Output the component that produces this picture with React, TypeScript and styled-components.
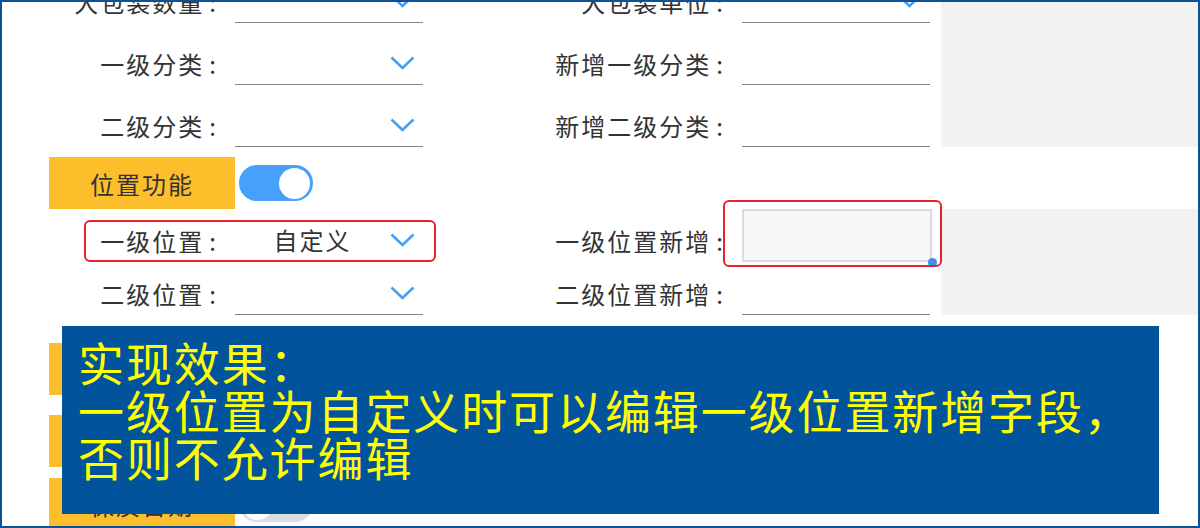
import styled, { createGlobalStyle } from "styled-components";

const GlobalStyle = createGlobalStyle`
  html, body {
    margin: 0;
    padding: 0;
    background: #ffffff;
  }
  body {
    font-family: "Noto Sans CJK SC", "Noto Sans", sans-serif;
  }
`;

const Chevron = () => (
  <svg width="25" height="14" viewBox="0 0 25 14">
    <polyline
      points="1.5,1.5 12.5,12 23.5,1.5"
      fill="none"
      stroke="#45a0f5"
      strokeWidth="2.6"
    />
  </svg>
);

const App = () => {
  return (
    <Frame>
      <GlobalStyle />
      <Content>
        <Group>
          <Rows>
            <Row $height={62}>
              <Item>
                <Label $width={169}>大包装数量</Label>
                <Field>
                  <Value />
                  <Chevron />
                </Field>
              </Item>
              <Item>
                <Label $width={285}>大包装单位</Label>
                <Field>
                  <Value />
                  <Chevron />
                </Field>
              </Item>
            </Row>
            <Row $height={62}>
              <Item>
                <Label $width={169}>一级分类</Label>
                <Field>
                  <Value />
                  <Chevron />
                </Field>
              </Item>
              <Item>
                <Label $width={285}>新增一级分类</Label>
                <Field />
              </Item>
            </Row>
            <Row $height={62}>
              <Item>
                <Label $width={169}>二级分类</Label>
                <Field>
                  <Value />
                  <Chevron />
                </Field>
              </Item>
              <Item>
                <Label $width={285}>新增二级分类</Label>
                <Field />
              </Item>
            </Row>
          </Rows>
          <Side />
        </Group>

        <Section $gap={10}>
          <Badge>位置功能</Badge>
          <Toggle $on>
            <Knob />
          </Toggle>
        </Section>

        <Group>
          <Rows>
            <Row $height={53}>
              <Item>
                <Label $width={169}>一级位置</Label>
                <Field>
                  <Value>自定义</Value>
                  <Chevron />
                </Field>
                <Highlight />
              </Item>
              <Item>
                <Label $width={285}>一级位置新增</Label>
                <AreaWrap>
                  <TextArea />
                  <ResizeDot />
                  <AreaHighlight />
                </AreaWrap>
              </Item>
            </Row>
            <Row $height={53}>
              <Item>
                <Label $width={169}>二级位置</Label>
                <Field>
                  <Value />
                  <Chevron />
                </Field>
              </Item>
              <Item>
                <Label $width={285}>二级位置新增</Label>
                <Field />
              </Item>
            </Row>
          </Rows>
          <Side />
        </Group>

        <Section $gap={28}>
          <Badge>单位功能</Badge>
          <Toggle>
            <Knob />
          </Toggle>
        </Section>
        <Section $gap={20}>
          <Badge>批次功能</Badge>
          <Toggle>
            <Knob />
          </Toggle>
        </Section>
        <Section $gap={11}>
          <Badge>保质日期</Badge>
          <Toggle>
            <Knob />
          </Toggle>
        </Section>
      </Content>

      <Callout>
        实现效果：
        <br />
        一级位置为自定义时可以编辑一级位置新增字段，
        <br />
        否则不允许编辑
      </Callout>
    </Frame>
  );
};

const Frame = styled.div`
  position: relative;
  width: 1200px;
  height: 528px;
  box-sizing: border-box;
  border: 2px solid #0f5197;
  overflow: hidden;
  background: #ffffff;
`;

const Content = styled.div`
  margin-top: -41px;
  padding-left: 47px;
`;

const Group = styled.div`
  display: flex;
`;

const Rows = styled.div`
  display: flex;
  flex-direction: column;
`;

const Row = styled.div<{ $height: number }>`
  display: flex;
  gap: 17px;
  height: ${({ $height }) => $height}px;
`;

const Item = styled.div`
  position: relative;
  display: flex;
  align-items: flex-end;
  gap: 17px;
`;

const Label = styled.div<{ $width: number }>`
  width: ${({ $width }) => $width}px;
  text-align: right;
  font-size: 24px;
  letter-spacing: 2px;
  line-height: 42px;
  color: #333333;
  white-space: nowrap;
  &::after {
    content: ":";
    margin-left: 5px;
  }
`;

const Field = styled.div`
  width: 188px;
  height: 42px;
  box-sizing: border-box;
  display: flex;
  align-items: center;
  border-bottom: 1px solid #858585;
  padding-right: 8px;
  padding-bottom: 2px;
`;

const Value = styled.span`
  flex: 1;
  text-align: center;
  font-size: 24px;
  letter-spacing: 2px;
  color: #333333;
`;

const Highlight = styled.div`
  position: absolute;
  top: 11px;
  bottom: 0;
  left: 35px;
  right: -13px;
  border: 2px solid #e8222b;
  border-radius: 6px;
  pointer-events: none;
`;

const AreaWrap = styled.div`
  position: relative;
  width: 190px;
  margin-right: -2px;
  height: 53px;
  align-self: stretch;
`;

const TextArea = styled.div`
  width: 100%;
  height: 100%;
  box-sizing: border-box;
  background: #f7f7f7;
  border: 2px solid #dadadd;
`;

const ResizeDot = styled.div`
  position: absolute;
  right: -5px;
  bottom: -5px;
  width: 9px;
  height: 9px;
  border-radius: 50%;
  background: #3d8ff0;
`;

const AreaHighlight = styled.div`
  position: absolute;
  top: -9px;
  bottom: -5px;
  left: -19px;
  right: -10px;
  border: 2px solid #e8222b;
  border-radius: 6px;
  pointer-events: none;
`;

const Side = styled.div`
  flex: 1;
  margin-left: 11px;
  background: #f2f2f2;
`;

const Section = styled.div<{ $gap: number }>`
  display: flex;
  align-items: center;
  gap: 4px;
  margin-top: ${({ $gap }) => $gap}px;
`;

const Badge = styled.div`
  width: 186px;
  height: 52px;
  display: flex;
  align-items: center;
  justify-content: center;
  background: #fcbe2b;
  font-size: 24px;
  letter-spacing: 2px;
  color: #333333;
`;

const Toggle = styled.div<{ $on?: boolean }>`
  width: 74px;
  height: 36px;
  box-sizing: border-box;
  padding: 0 3px;
  border-radius: 18px;
  display: flex;
  align-items: center;
  justify-content: ${({ $on }) => ($on ? "flex-end" : "flex-start")};
  background: ${({ $on }) => ($on ? "#47a0fc" : "#dcdde1")};
`;

const Knob = styled.div`
  width: 31px;
  height: 31px;
  border-radius: 50%;
  background: #ffffff;
`;

const Callout = styled.div`
  position: absolute;
  left: 60px;
  top: 324px;
  width: 1097px;
  height: 188px;
  box-sizing: border-box;
  padding: 12px 16px;
  background: #01539b;
  color: #ffff00;
  font-size: 46px;
  line-height: 47.5px;
  letter-spacing: 1.9px;
  white-space: nowrap;
`;

export default App;
